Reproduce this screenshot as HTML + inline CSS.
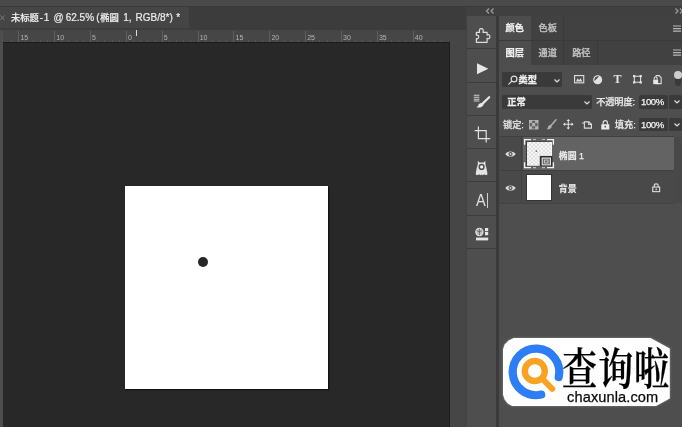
<!DOCTYPE html>
<html lang="zh-CN">
<head>
<meta charset="utf-8">
<title>未标题-1 @ 62.5% (椭圆 1, RGB/8*)</title>
<style>
*{box-sizing:border-box;margin:0;padding:0}
html,body{width:682px;height:427px;overflow:hidden;background:#282828}
body{position:relative;font-family:"Liberation Sans","Noto Sans CJK SC",sans-serif;color:#e6e6e6;font-size:9.2px;line-height:1;font-weight:500}
.a{position:absolute}
.t{position:absolute;white-space:nowrap;line-height:12px;height:12px;filter:blur(.3px);-webkit-text-stroke:.25px currentColor}
svg{position:absolute;overflow:visible;filter:blur(.3px)}
.b{font-weight:bold;color:#f0f0f0;font-size:9.2px}
.cj{font-size:9.3px}
/* top */
#topstrip{left:0;top:0;width:682px;height:6px;background:#4a4a4a}
#topline{left:0;top:6px;width:682px;height:1px;background:#3a3a3a}
#tabbar{left:0;top:7px;width:466px;height:23px;background:#3c3c3c}
#tab{left:0;top:7px;width:189.3px;height:21.3px;background:#454545}
#ruler{left:0;top:30px;width:450px;height:12px;background:#464646}
#ruler2{left:0;top:28.3px;width:190px;height:1.7px;background:#3e3e3e}
#rulerline{left:0;top:42px;width:450px;height:1px;background:#1c1c1c}
#vruler{left:0;top:30px;width:2.8px;height:397px;background:#4e4e4e}
#gap{left:450px;top:30px;width:16px;height:397px;background:#464646}
.tk{position:absolute;top:31px;width:1px;height:11px;background:#5f5f5f}
.tm{position:absolute;top:39.5px;width:1px;height:2.5px;background:#585858}
.rn{position:absolute;top:34px;font-size:7px;line-height:8px;color:#b4b4b4;filter:blur(.3px)}
#canvas{left:125.3px;top:185.5px;width:203.2px;height:203px;background:#fff;box-shadow:1px 1px 1.5px rgba(0,0,0,.7)}
#dot{left:197.5px;top:257px;width:10px;height:10px;border-radius:50%;background:#262626;filter:blur(.4px)}
/* tool strip */
#headr{left:466px;top:7px;width:216px;height:9px;background:#404040}
#strip{left:466px;top:16px;width:30.4px;height:411px;background:#4e4e4e;border-left:1px solid #414141}
#stripcells{left:466px;top:16px;width:30.3px;height:232px;background:#4e4e4e;border-left:1px solid #414141}
.sep{position:absolute;left:466px;width:30.3px;height:1px;background:#3c3c3c}
#div1{left:496.3px;top:16px;width:3px;height:411px;background:#3a3a3a}
/* panel */
#panel{left:499.3px;top:16px;width:182.7px;height:411px;background:#4e4e4e}
#rows{left:499.3px;top:137px;width:174.7px;height:66px;background:#494949}
.tabrow{position:absolute;left:499.3px;width:182.7px;height:25.2px;background:#414141}
.ptab{position:absolute;top:0;height:25px;background:#4d4d4d}
.dd{position:absolute;background:#3a3a3a;border-radius:1.5px}
.ic{stroke:#dedede;fill:none;stroke-width:1.2}
#row1{left:523px;top:137px;width:151px;height:33px;background:#636363}
#rowline0{left:499px;top:136px;width:175px;height:1px;background:#3f3f3f}
#rowline{left:499px;top:170px;width:175px;height:1px;background:#3f3f3f}
#rowline2{left:499px;top:203px;width:175px;height:1px;background:#434343}
#eyecol{left:521px;top:137px;width:1px;height:66px;background:#404040}
#scroll{left:674px;top:137px;width:8px;height:66px;background:#484848}
</style>
</head>
<body>
<div class="a" id="tabbar"></div>
<div class="a" id="topstrip"></div>
<div class="a" id="topline"></div>
<div class="a" id="tab"></div>
<svg width="6" height="6" viewBox="0 0 6 6" style="left:0;top:15px"><path d="M0.5 0.5L4.5 5M4.5 0.5L0.5 5" stroke="#7c7c7c" stroke-width="1" fill="none"/></svg>
<div class="t" id="title" style="left:11px;top:11.7px;font-size:10px;color:#ececec;-webkit-text-stroke:.2px #ececec"><span class="cj">未标题</span><span style="margin-left:.8px;letter-spacing:.8px">-1</span> <span style="margin-left:.6px">@</span> <span style="margin-left:-.8px">62.5%</span> <span style="margin-left:-.5px">(</span><span class="cj" style="margin-left:.6px">椭圆</span> <span style="margin-left:1.6px">1,</span> <span style="margin-left:1.2px">RGB/8*)</span> <span style="margin-left:.6px">*</span></div>
<div class="a" id="ruler"></div>
<div class="a" id="ruler2"></div>
<div class="a" id="gap"></div>
<div class="tk" style="left:18.2px"></div><div class="rn" style="left:20.4px">15</div>
<div class="tm" style="left:25.4px"></div>
<div class="tm" style="left:32.6px"></div>
<div class="tm" style="left:39.8px"></div>
<div class="tm" style="left:46.9px"></div>
<div class="tk" style="left:54.1px"></div><div class="rn" style="left:56.3px">10</div>
<div class="tm" style="left:61.3px"></div>
<div class="tm" style="left:68.4px"></div>
<div class="tm" style="left:75.6px"></div>
<div class="tm" style="left:82.8px"></div>
<div class="tk" style="left:89.9px"></div><div class="rn" style="left:92.1px">5</div>
<div class="tm" style="left:97.1px"></div>
<div class="tm" style="left:104.3px"></div>
<div class="tm" style="left:111.5px"></div>
<div class="tm" style="left:118.6px"></div>
<div class="tk" style="left:125.8px"></div><div class="rn" style="left:128.0px">0</div>
<div class="tm" style="left:133.0px"></div>
<div class="tm" style="left:140.1px"></div>
<div class="tm" style="left:147.3px"></div>
<div class="tm" style="left:154.5px"></div>
<div class="tk" style="left:161.7px"></div><div class="rn" style="left:163.8px">5</div>
<div class="tm" style="left:168.8px"></div>
<div class="tm" style="left:176.0px"></div>
<div class="tm" style="left:183.2px"></div>
<div class="tm" style="left:190.3px"></div>
<div class="tk" style="left:197.5px"></div><div class="rn" style="left:199.7px">10</div>
<div class="tm" style="left:204.7px"></div>
<div class="tm" style="left:211.8px"></div>
<div class="tm" style="left:219.0px"></div>
<div class="tm" style="left:226.2px"></div>
<div class="tk" style="left:233.4px"></div><div class="rn" style="left:235.6px">15</div>
<div class="tm" style="left:240.5px"></div>
<div class="tm" style="left:247.7px"></div>
<div class="tm" style="left:254.9px"></div>
<div class="tm" style="left:262.0px"></div>
<div class="tk" style="left:269.2px"></div><div class="rn" style="left:271.4px">20</div>
<div class="tm" style="left:276.4px"></div>
<div class="tm" style="left:283.5px"></div>
<div class="tm" style="left:290.7px"></div>
<div class="tm" style="left:297.9px"></div>
<div class="tk" style="left:305.1px"></div><div class="rn" style="left:307.2px">25</div>
<div class="tm" style="left:312.2px"></div>
<div class="tm" style="left:319.4px"></div>
<div class="tm" style="left:326.6px"></div>
<div class="tm" style="left:333.7px"></div>
<div class="tk" style="left:340.9px"></div><div class="rn" style="left:343.1px">30</div>
<div class="tm" style="left:348.1px"></div>
<div class="tm" style="left:355.2px"></div>
<div class="tm" style="left:362.4px"></div>
<div class="tm" style="left:369.6px"></div>
<div class="tk" style="left:376.8px"></div><div class="rn" style="left:378.9px">35</div>
<div class="tm" style="left:383.9px"></div>
<div class="tm" style="left:391.1px"></div>
<div class="tm" style="left:398.3px"></div>
<div class="tm" style="left:405.4px"></div>
<div class="tk" style="left:412.6px"></div><div class="rn" style="left:414.8px">40</div>
<div class="tm" style="left:419.8px"></div>
<div class="tm" style="left:426.9px"></div>
<div class="tm" style="left:434.1px"></div>
<div class="tm" style="left:441.3px"></div>
<div class="tm" style="left:11.1px"></div>
<div class="a" style="left:136px;top:30px;width:1px;height:6px;background:#ddd"></div>
<div class="a" id="rulerline"></div>
<div class="a" id="vruler"></div>
<div class="a" style="left:449px;top:42px;width:1px;height:385px;background:#1e1e1e"></div>
<div class="a" id="canvas"></div>
<div class="a" id="dot"></div>

<div class="a" id="headr"></div>
<div class="a" id="strip"></div>
<div class="a" id="stripcells"></div>
<div class="sep" style="top:48px"></div>
<div class="sep" style="top:81.5px"></div>
<div class="sep" style="top:114.5px"></div>
<div class="sep" style="top:148px"></div>
<div class="sep" style="top:181px"></div>
<div class="sep" style="top:214.5px"></div>
<div class="sep" style="top:248px"></div>
<div class="a" id="div1"></div>
<div class="a" id="panel"></div>

<!-- collapse chevrons -->
<svg width="10" height="6" viewBox="0 0 10 6" style="left:485px;top:8px"><path d="M4 0.5L1.5 3L4 5.5M8.5 0.5L6 3L8.5 5.5" class="ic" stroke-width="1.3" style="stroke:#a0a0a0"/></svg>
<svg width="10" height="6" viewBox="0 0 10 6" style="left:674px;top:8px"><path d="M1.5 0.5L4 3L1.5 5.5M6 0.5L8.5 3L6 5.5" class="ic" stroke-width="1.3" style="stroke:#a0a0a0"/></svg>

<!-- tool strip icons -->
<svg width="18" height="18" viewBox="474 27 18 18" style="left:474px;top:27px"><path d="M476.4 32.3H479.7C478.7 30.2 479.6 28.7 481.3 28.7C483 28.7 483.9 30.2 482.9 32.3H487.1V35.1C488.8 34.1 489.9 35.2 489.9 36.7C489.9 38.2 488.8 39.3 487.1 38.3V42.3H476.4V38.6C477.9 39.2 478.7 38.1 478.7 36.9C478.7 35.7 477.9 34.8 476.4 35.3Z" class="ic" stroke-width="1.5" stroke-linejoin="round"/></svg>
<svg width="12" height="12" viewBox="0 0 12 12" style="left:476.5px;top:62.5px"><path d="M0 0.3L11.4 5.8L0 11.2Z" fill="#e6e6e6"/></svg>
<svg width="18" height="14" viewBox="0 0 18 14" style="left:473.1px;top:94.2px"><path d="M0.8 1.2H6.4M0.8 3.2H6.4M0.8 5.2H6.4M0.8 7H6.4" stroke="#cfcfcf" stroke-width="1.1" fill="none"/><path d="M16.2 3.2L9.6 9.6" stroke="#e8e8e8" stroke-width="2.2" stroke-linecap="round" fill="none"/><path d="M9.4 9.2C7.6 8.4 5.6 9.8 5.2 11.4C4.8 12.6 3.8 13 3 13C5.4 14.2 9 13.6 10.2 11.6C10.8 10.6 10.4 9.6 9.4 9.2Z" fill="#e8e8e8"/></svg>
<svg width="17" height="17" viewBox="0 0 17 17" style="left:473.5px;top:126px"><path d="M4.4 0.6V12.6H16.2M0.6 4.6H12.2V16.4" class="ic" stroke-width="1.7" style="stroke:#e2e2e2"/></svg>
<svg width="14" height="17" viewBox="475 160 14 17" style="left:475px;top:160px"><path fill-rule="evenodd" d="M477.9 160.8L479.4 162.6H483.8L485.3 160.8L485.5 165C486.4 167.4 486.9 170 487.4 173.2C487.5 174 487.2 174.9 486.4 175.1C485.6 175.3 485 174.6 484.4 174.6C483.6 174.6 483.2 175.3 482.5 175.3C482 175.3 481.9 174.6 481.6 174.6C481.3 174.6 481.2 175.3 480.7 175.3C480 175.3 479.6 174.6 478.8 174.6C478.2 174.6 477.6 175.3 476.8 175.1C476 174.9 475.7 174 475.8 173.2C476.3 170 476.8 167.4 477.7 165ZM481.6 163.8A3.1 3.1 0 1 0 481.6 170A3.1 3.1 0 1 0 481.6 163.8Z" fill="#e4e4e4"/><circle cx="481.6" cy="166.9" r="1.6" fill="#f4f4f4"/></svg>
<div class="t" style="left:476px;top:192px;font-size:16.2px;line-height:16px;height:16px;color:#e2e2e2;letter-spacing:0;-webkit-text-stroke:0;transform-origin:0 50%;transform:scaleX(.9)">A</div>
<div class="a" style="left:486.9px;top:193.4px;width:1.1px;height:14.3px;background:#d0d0d0"></div>
<svg width="14" height="14" viewBox="0 0 14 14" style="left:475px;top:226.5px"><circle cx="4.4" cy="5" r="3.6" fill="#bdbdbd" stroke="#e6e6e6" stroke-width="1.1"/><path d="M4.4 1.6V8.4M1.6 3.4L4.4 5L7.2 3.4" stroke="#5a5a5a" stroke-width="0.8" fill="none"/><rect x="10" y="1" width="3.2" height="3.2" fill="#e6e6e6"/><rect x="10" y="5" width="3.2" height="3.2" fill="#e6e6e6"/><rect x="1" y="10.6" width="12.2" height="2.8" fill="#e6e6e6"/></svg>

<!-- panel tabs -->
<div class="tabrow" style="top:15.5px;height:24.5px"><div class="ptab" style="left:0;width:31.7px;height:24.5px"></div><div class="a" style="left:63.5px;top:0;width:1px;height:24px;background:#3a3a3a"></div></div>
<div class="tabrow" style="top:40px;border-top:1px solid #3a3a3a"><div class="ptab" style="left:0;width:31.7px;top:0;height:24.2px"></div><div class="a" style="left:63.5px;top:0;width:1px;height:24px;background:#3a3a3a"></div><div class="a" style="left:98px;top:0;width:1px;height:24px;background:#3a3a3a"></div></div>
<div class="t b" style="left:505.5px;top:21.5px">颜色</div>
<div class="t" style="left:538.5px;top:21.5px;color:#c4c4c4">色板</div>
<div class="t b" style="left:505.5px;top:46.5px">图层</div>
<div class="t" style="left:538.5px;top:46.5px;color:#c4c4c4">通道</div>
<div class="t" style="left:572.2px;top:46.5px;color:#c8c8c8">路径</div>
<svg width="8" height="8" viewBox="0 0 8 8" style="left:673px;top:24.6px"><path d="M0 1H8M0 3.6H8M0 6.2H8" stroke="#b8b8b8" stroke-width="1.2"/></svg>
<svg width="8" height="8" viewBox="0 0 8 8" style="left:673px;top:48.6px"><path d="M0 1H8M0 3.6H8M0 6.2H8" stroke="#b8b8b8" stroke-width="1.2"/></svg>

<!-- filter row -->
<div class="dd" style="left:502px;top:72.2px;width:60px;height:14.8px"></div>
<svg width="10" height="10" viewBox="0 0 10 10" style="left:507.5px;top:74.5px"><circle cx="6" cy="4" r="2.9" class="ic" stroke-width="1.4"/><path d="M3.8 6.2L0.8 9.2" class="ic" stroke-width="1.6" stroke-linecap="round"/></svg>
<div class="t b" style="left:518.5px;top:73.6px">类型</div>
<svg width="6" height="4" viewBox="0 0 6 4" style="left:554px;top:78.5px"><path d="M0.5 0.5L3 3L5.5 0.5" class="ic" stroke-width="1.3"/></svg>
<svg width="10.3" height="8.4" viewBox="0 0 11 9" preserveAspectRatio="none" style="left:573.8px;top:74.6px"><rect x="0.6" y="0.6" width="9.8" height="7.8" class="ic" stroke-width="1.2"/><path d="M2 7L4 3.4L5.5 5.6L7 3.4L9 7Z" fill="#dedede"/></svg>
<svg width="9.4" height="9.4" viewBox="0 0 10 10" style="left:593.3px;top:74.5px"><circle cx="5" cy="5" r="4.2" fill="#e2e2e2"/><path d="M1.4 6.6A4 4 0 0 1 6.6 1.4Z" fill="#4a4a4a"/><circle cx="5" cy="5" r="4.2" class="ic" stroke-width="1"/></svg>
<div class="t" style="left:613.6px;top:72.3px;font-family:'Liberation Serif',serif;font-weight:bold;font-size:12px;line-height:14px;height:14px;color:#e4e4e4;-webkit-text-stroke:0">T</div>
<svg width="8.9" height="8.5" viewBox="0 0 10 10" preserveAspectRatio="none" style="left:633px;top:75.1px"><rect x="1.5" y="1.5" width="7" height="7" class="ic" stroke-width="1.3"/><rect x="0" y="0" width="2.6" height="2.6" fill="#e2e2e2"/><rect x="7.4" y="0" width="2.6" height="2.6" fill="#e2e2e2"/><rect x="0" y="7.4" width="2.6" height="2.6" fill="#e2e2e2"/><rect x="7.4" y="7.4" width="2.6" height="2.6" fill="#e2e2e2"/></svg>
<svg width="8.9" height="9.3" viewBox="0 0 10 10" preserveAspectRatio="none" style="left:653px;top:74.7px"><path d="M3 0.7H7L9.2 3V9.3H3" class="ic" stroke-width="1.3"/><rect x="0.2" y="5" width="5.6" height="4.8" fill="#e6e6e6"/><path d="M1.4 5V3.6A1.6 1.6 0 0 1 4.6 3.6V5" class="ic" stroke-width="1.1"/></svg>
<div class="a" style="left:674.5px;top:75px;width:6.5px;height:11px;border-radius:3.2px;background:#3a3a3a"></div>
<div class="a" style="left:673.8px;top:71.4px;width:7.8px;height:7.8px;border-radius:50%;background:#cdcdcd;filter:blur(.3px)"></div>

<!-- blend row -->
<div class="dd" style="left:502px;top:94.5px;width:90px;height:14.5px"></div>
<div class="t b" style="left:507.3px;top:95.7px">正常</div>
<svg width="6" height="4" viewBox="0 0 6 4" style="left:584px;top:100.5px"><path d="M0.5 0.5L3 3L5.5 0.5" class="ic" stroke-width="1.3"/></svg>
<div class="t" style="left:596.2px;top:95.7px;color:#e8e8e8;letter-spacing:-0.1px">不透明度:</div>
<div class="dd" style="left:639px;top:95.2px;width:28.8px;height:13.6px"></div>
<div class="dd" style="left:669.2px;top:95.2px;width:12.8px;height:13.6px"></div>
<div class="t" style="left:641px;top:96.2px;color:#f4f4f4;letter-spacing:-0.45px;font-size:9.6px">100%</div>
<svg width="6" height="4" viewBox="0 0 6 4" style="left:673.5px;top:100.2px"><path d="M0.5 0.5L3 3L5.5 0.5" class="ic" stroke-width="1.3"/></svg>

<!-- lock row -->
<div class="t" style="left:503px;top:118.9px;color:#e8e8e8">锁定:</div>
<svg width="9.3" height="9.3" viewBox="0 0 10 10" style="left:528.8px;top:119.8px"><rect x="0" y="0" width="10" height="10" fill="#626262"/><path d="M0 0H3.3V3.3H0ZM6.6 0H10V3.3H6.6ZM3.3 3.3H6.6V6.6H3.3ZM0 6.6H3.3V10H0ZM6.6 6.6H10V10H6.6Z" fill="#b0b0b0"/><rect x="0.4" y="0.4" width="9.2" height="9.2" fill="none" stroke="#b4b4b4" stroke-width="0.8"/></svg>
<svg width="11" height="11" viewBox="0 0 11 11" style="left:545.6px;top:119.3px"><path d="M10 0.8L4.6 7" stroke="#b0b0b0" stroke-width="1.5" stroke-linecap="round"/><path d="M4.8 6.2C3.4 5.8 2.2 7 2 8.2C1.8 9.2 1.2 9.8 0.4 10C2.2 10.8 4.6 10.2 5.4 8.6C5.8 7.6 5.6 6.6 4.8 6.2Z" fill="#b0b0b0"/></svg>
<svg width="10.6" height="10.6" viewBox="0 0 12 12" style="left:563px;top:119.1px"><path d="M6 1V11M1 6H11" class="ic" stroke-width="1.3"/><path d="M6 0L8 2.4H4ZM6 12L8 9.6H4ZM0 6L2.4 4V8ZM12 6L9.6 4V8Z" fill="#e2e2e2"/></svg>
<svg width="10" height="8" viewBox="0 0 11 9" preserveAspectRatio="none" style="left:581.6px;top:120.6px"><path d="M0 2.2H2.6M2.6 0.4V8H10.4V3.6L7.6 1H2.6" class="ic" stroke-width="1.2"/><path d="M7.4 1V3.8H10.4" class="ic" stroke-width="1"/></svg>
<svg width="8.6" height="9.6" viewBox="0 0 9 10" preserveAspectRatio="none" style="left:600.6px;top:119.5px"><path d="M2.2 4.6V3A2.3 2.3 0 0 1 6.8 3V4.6" class="ic" stroke-width="1.4"/><path fill-rule="evenodd" d="M0.3 4.4H8.7V9.8H0.3ZM4.5 6.1A0.9 0.9 0 1 0 4.5 7.9A0.9 0.9 0 1 0 4.5 6.1Z" fill="#ececec"/></svg>
<div class="t" style="left:614.8px;top:119px;color:#e8e8e8">填充:</div>
<div class="dd" style="left:639px;top:117.7px;width:28.8px;height:13.6px"></div>
<div class="dd" style="left:669.2px;top:117.7px;width:12.8px;height:13.6px"></div>
<div class="t" style="left:641px;top:119px;color:#f4f4f4;letter-spacing:-0.45px;font-size:9.6px">100%</div>
<svg width="6" height="4" viewBox="0 0 6 4" style="left:673.5px;top:123.2px"><path d="M0.5 0.5L3 3L5.5 0.5" class="ic" stroke-width="1.3"/></svg>

<!-- layers -->
<div class="a" id="rows"></div>
<div class="a" id="scroll"></div>
<div class="a" id="rowline0"></div>
<div class="a" id="row1"></div>
<div class="a" id="rowline"></div>
<div class="a" id="rowline2"></div>
<div class="a" id="eyecol"></div>
<svg width="11" height="8" viewBox="0 0 11 8" style="left:505.2px;top:150.4px"><path d="M0.3 4C2.2 0.6 8.8 0.6 10.7 4C8.8 7.4 2.2 7.4 0.3 4Z" fill="#e0e0e0"/><circle cx="5.5" cy="4" r="2.1" fill="#4a4a4a"/><circle cx="5.5" cy="4" r="0.9" fill="#e0e0e0"/></svg>
<svg width="11" height="8" viewBox="0 0 11 8" style="left:505.2px;top:183.6px"><path d="M0.3 4C2.2 0.6 8.8 0.6 10.7 4C8.8 7.4 2.2 7.4 0.3 4Z" fill="#e0e0e0"/><circle cx="5.5" cy="4" r="2.1" fill="#4a4a4a"/><circle cx="5.5" cy="4" r="0.9" fill="#e0e0e0"/></svg>
<!-- thumb 1 -->
<svg width="30" height="29.2" viewBox="0 0 30 30" preserveAspectRatio="none" style="left:524px;top:138.6px">
  <rect x="2" y="2" width="26" height="26" fill="#3a3a3a"/>
  <rect x="3" y="3" width="25" height="24.5" fill="#f8f8f8"/>
  <path d="M3 3h2v2h-2zM7 3h2v2h-2zM11 3h2v2h-2zM15 3h2v2h-2zM19 3h2v2h-2zM23 3h2v2h-2zM5 5h2v2h-2zM9 5h2v2h-2zM13 5h2v2h-2zM17 5h2v2h-2zM21 5h2v2h-2zM25 5h2v2h-2zM3 7h2v2h-2zM7 7h2v2h-2zM11 7h2v2h-2zM15 7h2v2h-2zM19 7h2v2h-2zM23 7h2v2h-2zM5 9h2v2h-2zM9 9h2v2h-2zM13 9h2v2h-2zM17 9h2v2h-2zM21 9h2v2h-2zM25 9h2v2h-2zM3 11h2v2h-2zM7 11h2v2h-2zM11 11h2v2h-2zM15 11h2v2h-2zM19 11h2v2h-2zM23 11h2v2h-2zM5 13h2v2h-2zM9 13h2v2h-2zM13 13h2v2h-2zM17 13h2v2h-2zM21 13h2v2h-2zM25 13h2v2h-2zM3 15h2v2h-2zM7 15h2v2h-2zM11 15h2v2h-2zM15 15h2v2h-2zM19 15h2v2h-2zM23 15h2v2h-2zM5 17h2v2h-2zM9 17h2v2h-2zM13 17h2v2h-2zM17 17h2v2h-2zM21 17h2v2h-2zM25 17h2v2h-2zM3 19h2v2h-2zM7 19h2v2h-2zM11 19h2v2h-2zM15 19h2v2h-2zM19 19h2v2h-2zM23 19h2v2h-2zM5 21h2v2h-2zM9 21h2v2h-2zM13 21h2v2h-2zM17 21h2v2h-2zM21 21h2v2h-2zM25 21h2v2h-2zM3 23h2v2h-2zM7 23h2v2h-2zM11 23h2v2h-2zM15 23h2v2h-2zM19 23h2v2h-2zM23 23h2v2h-2zM5 25h2v2h-2zM9 25h2v2h-2zM13 25h2v2h-2zM17 25h2v2h-2zM21 25h2v2h-2zM25 25h2v2h-2z" fill="#dedede"/>
  <circle cx="12.4" cy="12.4" r="0.9" fill="#666"/>
  <rect x="15.8" y="17.4" width="12.6" height="10.4" fill="#2e2e2e"/>
  <rect x="18.2" y="19.6" width="8.2" height="7" fill="#6a6a6a" stroke="#e8e8e8" stroke-width="1.1"/>
  <rect x="20.6" y="21.6" width="3.4" height="3" fill="none" stroke="#d8d8d8" stroke-width="0.8"/>
  <path d="M0.6 6V0.6H7M23 0.6H29.4V6M29.4 24V29.4H23M7 29.4H0.6V24" fill="none" stroke="#f2f2f2" stroke-width="1.3"/>
  <path d="M9 0.6H12M18 0.6H21M9 29.4H12M18 29.4H21" fill="none" stroke="#e0e0e0" stroke-width="1.1" opacity=".7"/>
</svg>
<div class="a" style="left:525.8px;top:173.6px;width:26.6px;height:27.3px;background:#fff;border:1px solid #353535"></div>
<div class="t" style="left:558.8px;top:149.8px;color:#f0f0f0;font-size:8.9px">椭圆 1</div>
<div class="t" style="left:558.8px;top:183px;color:#f0f0f0;font-size:8.9px">背景</div>
<svg width="8.4" height="9.2" viewBox="0 0 9 10" preserveAspectRatio="none" style="left:651.8px;top:182.9px"><path d="M2.4 4.4V3A2.1 2.1 0 0 1 6.6 3V4.4" class="ic" stroke-width="1.1"/><rect x="0.8" y="4.4" width="7.4" height="5" class="ic" stroke-width="1.1"/><rect x="3.8" y="6" width="1.4" height="1.8" fill="#e0e0e0"/></svg>

<!-- watermark -->
<div class="a" style="left:0;top:0;width:682px;height:427px;filter:drop-shadow(0 0 1.2px rgba(255,255,255,.35))">
<div class="a" id="wm" style="left:502.6px;top:337.6px;width:167.2px;height:68.6px;background:#fff;overflow:hidden;clip-path:polygon(0 13px,2px 7px,6px 3px,12px 0,147px 0,167.2px 11px,167.2px 61px,153px 68.6px,10px 68.6px,5px 66px,2px 62px,0 56px);filter:blur(.35px)">
  <svg width="167" height="68" viewBox="0 0 167 68" style="left:0;top:0;filter:none">
    <path d="M 55.7 39.1 A 23.3 23.3 0 1 0 38.2 56.6" fill="none" stroke="#2d7df4" stroke-width="8.2" stroke-linecap="round"/>
    <circle cx="31.8" cy="33" r="10" fill="none" stroke="#f8a322" stroke-width="6.4"/>
    <path d="M39.6 41 L49.2 50.8" stroke="#f8a322" stroke-width="6" stroke-linecap="round"/>
  </svg>
  <div class="t" id="wmcn" style="left:59.5px;top:11.2px;font-family:'Liberation Serif','Noto Serif CJK SC',serif;font-size:44px;line-height:44px;height:44px;color:#000;font-weight:600;letter-spacing:1px;filter:none;transform-origin:0 50%;transform:scale(.8,1)">查询啦</div>
  <div class="t" id="wmen" style="left:64.5px;top:50px;font-size:14.6px;line-height:18px;height:18px;color:#0a0a0a;letter-spacing:0.1px;filter:none;-webkit-text-stroke:.25px #0a0a0a">chaxunla.com</div>
</div>
</div>
</body>
</html>
